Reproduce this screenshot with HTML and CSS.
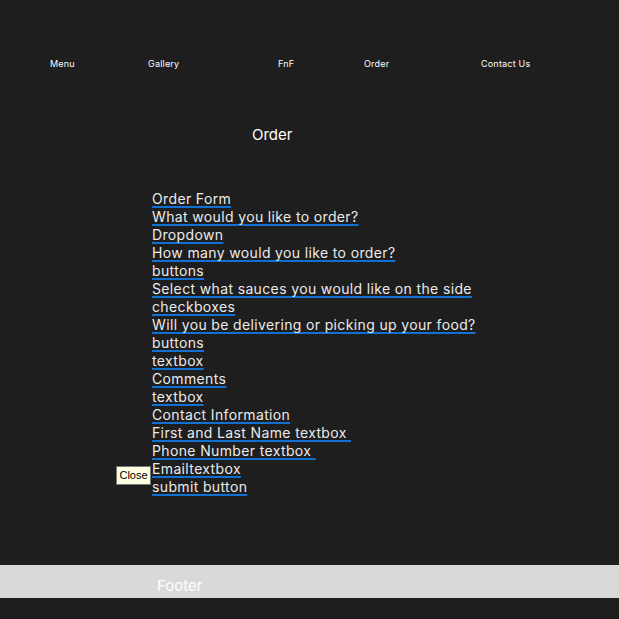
FILE: index.html
```html
<!DOCTYPE html>
<html lang="en">
<head>
<meta charset="utf-8">
<title>Order</title>
<link rel="stylesheet" href="styles.css">
</head>
<body>
<div class="page">
  <nav class="nav">
    <a class="nav-item">Menu</a>
    <a class="nav-item">Gallery</a>
    <a class="nav-item">FnF</a>
    <a class="nav-item">Order</a>
    <a class="nav-item">Contact Us</a>
  </nav>
  <h1 class="title">Order</h1>
  <div class="form">
    <span class="tooltip">Close</span>
    <ul class="items">
      <li><span class="u">Order Form</span></li>
      <li><span class="u">What would you like to order?</span></li>
      <li><span class="u">Dropdown</span></li>
      <li><span class="u">How many would you like to order?</span></li>
      <li><span class="u">buttons</span></li>
      <li><span class="u">Select what sauces you would like on the side</span></li>
      <li><span class="u">checkboxes</span></li>
      <li><span class="u">Will you be delivering or picking up your food?</span></li>
      <li><span class="u">buttons</span></li>
      <li><span class="u">textbox</span></li>
      <li><span class="u">Comments</span></li>
      <li><span class="u">textbox</span></li>
      <li><span class="u">Contact Information</span></li>
      <li><span class="u">First and Last Name textbox&nbsp;</span></li>
      <li><span class="u">Phone Number textbox&nbsp;</span></li>
      <li><span class="u">Emailtextbox</span></li>
      <li><span class="u">submit button</span></li>
    </ul>
  </div>
  <footer class="footer">Footer</footer>
</div>
</body>
</html>
```
FILE: styles.css
```css
html, body {
  margin: 0;
  padding: 0;
  background: #1e1e1e;
}
body {
  font-family: Inter, "Noto Sans", sans-serif;
  color: #ffffff;
}
.page {
  width: 619px;
  height: 619px;
  overflow: hidden;
}
.nav {
  display: grid;
  grid-template-columns: 98px 130px 86px 117px auto;
  padding: 58px 0 0 50px;
  height: 12px;
  font-size: 9px;
  letter-spacing: 0.2px;
  line-height: 12px;
}
.nav-item {
  color: #ffffff;
  white-space: nowrap;
}
.title {
  margin: 56px 0 0 252px;
  font-size: 15px;
  font-weight: 400;
  line-height: 18px;
}
.form {
  position: relative;
  margin: 46px 0 0 152px;
}
.items {
  list-style: none;
  margin: 0;
  padding: 0;
  font-size: 14px;
  letter-spacing: 0.36px;
  line-height: 18px;
}
.u {
  white-space: pre;
  text-decoration: underline;
  text-decoration-color: #1170d2;
  text-decoration-thickness: 2px;
  text-underline-offset: 2px;
  text-decoration-skip-ink: none;
  color: #ebebeb;
}
.tooltip {
  position: absolute;
  left: -36px;
  top: 276px;
  width: 33px;
  height: 17px;
  border: 1px solid #767676;
  background: #ffffe1;
  color: #000;
  font-family: "Liberation Sans", Arial, sans-serif;
  font-size: 11px;
  line-height: 17px;
  text-align: center;
}
.footer {
  margin-top: 69px;
  height: 33px;
  background: #d9d9d9;
  color: #ffffff;
  font-size: 15px;
  line-height: 18px;
  padding: 12px 0 0 157px;
  box-sizing: border-box;
}
```
